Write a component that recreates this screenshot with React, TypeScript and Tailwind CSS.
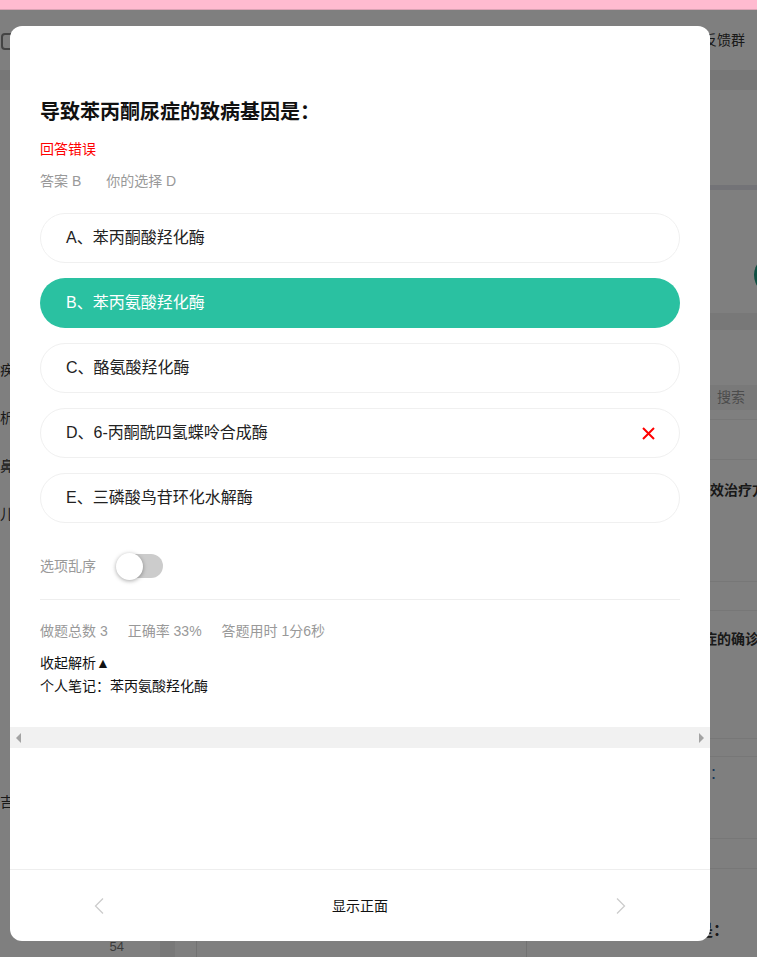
import React from "react";

const options = [
  { key: "A", text: "苯丙酮酸羟化酶" },
  { key: "B", text: "苯丙氨酸羟化酶", correct: true },
  { key: "C", text: "酪氨酸羟化酶" },
  { key: "D", text: "6-丙酮酰四氢蝶呤合成酶", wrong: true },
  { key: "E", text: "三磷酸鸟苷环化水解酶" },
];

const font = "font-['Liberation_Sans','Noto_Sans_CJK_SC',sans-serif]";

export default function App() {
  return (
    <div className={`h-[957px] w-[757px] overflow-hidden bg-white ${font}`}>
      <div className="h-[10px] border-b border-[#d9a3b4] bg-[#ffbbd0]" />
      <div className="relative h-[947px] overflow-hidden">
        <BackgroundPage />
        <div className="absolute inset-0 bg-black/50" />
        <QuestionModal />
      </div>
    </div>
  );
}

function BackgroundPage() {
  return (
    <div className="flex h-full flex-col bg-white text-[14px] text-[#333]">
      <header className="flex h-[60px] shrink-0 items-center justify-between pr-[12px]">
        <div className="ml-[1px] mt-[3px] h-[17px] w-[80px] rounded-[4px] border-2 border-[#888]" />
        <span className="leading-[20px]">问题反馈群</span>
      </header>
      <div className="h-[20px] shrink-0 bg-[#eeeeee]" />
      <div className="flex flex-1">
        <aside className="flex w-[160px] shrink-0 flex-col pt-[256px]">
          {["疾病分类", "析与诊断", "鼻咽癌症", "儿童疾病"].map((t, i) => (
            <div key={i} className="flex h-[48px] items-center whitespace-nowrap leading-[20px]">
              {t}
            </div>
          ))}
          <div className="mt-[254px] leading-[20px]">吉林</div>
          <div className="mt-auto flex h-[20px] justify-end pr-[36px] text-[13px] text-[#777]">54</div>
        </aside>
        <div className="flex w-[36px] shrink-0 flex-col">
          <div className="mt-auto h-[20px] w-[15px] bg-[#f0f0f0]" />
        </div>
        <main className="flex flex-1 flex-col">
          <div className="mt-auto h-[20px] border-x border-[#e4e4e4]" />
        </main>
        <section className="flex w-[230px] shrink-0 flex-col">
          <div className="h-[95px]" />
          <div className="h-[5px] bg-[#e6e6ee]" />
          <div className="flex h-[123px] items-start justify-end pt-[65px]">
            <div className="-mr-[37px] h-[40px] w-[40px] rounded-full bg-[#1f9f85]" />
          </div>
          <div className="h-[17px] bg-[#f0f0f0]" />
          <div className="h-[55px]" />
          <div className="flex h-[25px] items-center justify-end bg-[#f3f3f3] pr-[12px] text-[#999]">
            <span className="mr-[6px] text-[12px]">⚲</span>搜索
          </div>
          <div className="h-[10px] border-b border-[#eee]" />
          <div className="h-[40px] border-b border-[#eee]" />
          <div className="flex h-[60px] items-center pl-[169px] font-bold whitespace-nowrap">有效治疗方案</div>
          <div className="h-[62px] border-b border-[#eee]" />
          <div className="h-[29px] border-b border-[#eee]" />
          <div className="flex h-[56px] items-center pl-[162px] font-bold whitespace-nowrap">病症的确诊断</div>
          <div className="h-[72px] border-b border-[#eee]" />
          <div className="h-[18px] border-b border-[#eee]" />
          <div className="h-[40px] pl-[183px] pt-[6px] text-[#2a6bb0]">：</div>
          <div className="h-[42px] border-b border-[#eee]" />
          <div className="h-[30px] border-b border-[#eee]" />
          <div className="h-[40px]" />
          <div className="flex h-[44px] items-center pl-[170px] text-[16px] font-bold">是：</div>
        </section>
      </div>
    </div>
  );
}

function QuestionModal() {
  return (
    <div className="absolute left-[10px] top-[16px] flex h-[915px] w-[700px] flex-col overflow-hidden rounded-[12px] bg-white">
      <div className="flex-1">
        <div className="px-[30px] pt-[72px]">
          <h2 className="text-[20px] font-bold leading-[28px] text-[#111]">导致苯丙酮尿症的致病基因是：</h2>
          <p className="mt-[13px] text-[14px] leading-[20px] text-[#ff0000]">回答错误</p>
          <p className="mt-[12px] flex text-[14px] leading-[20px] text-[#999]">
            <span className="mr-[25px]">答案 B</span>
            <span>你的选择 D</span>
          </p>

          <div className="mt-[22px] flex flex-col gap-[15px]">
            {options.map((o) => (
              <div
                key={o.key}
                className={
                  o.correct
                    ? "flex h-[50px] items-center rounded-full bg-[#2ac1a1] pl-[26px] pr-[25px] text-[16px] text-white"
                    : "flex h-[50px] items-center rounded-full border border-[#f0f0f0] pl-[25px] pr-[24px] text-[16px] text-[#222]"
                }
              >
                <span className="flex-1">
                  {o.key}、{o.text}
                </span>
                {o.wrong && (
                  <svg width="13" height="13" viewBox="0 0 13 13" className="shrink-0">
                    <path d="M1 1L12 12M12 1L1 12" stroke="#ff0000" strokeWidth="2" />
                  </svg>
                )}
              </div>
            ))}
          </div>

          <div className="mt-[30px] flex h-[26px] items-center">
            <span className="text-[14px] leading-[20px] text-[#999]">选项乱序</span>
            <div className="relative ml-[21px] h-[24px] w-[46px] rounded-full bg-[#cccccc]">
              <div className="absolute -left-[1px] -top-[1px] h-[27px] w-[27px] rounded-full bg-white shadow-[0_1px_4px_rgba(0,0,0,0.35)]" />
            </div>
          </div>

          <div className="mt-[20px] border-t border-[#eeeeee]" />

          <p className="mt-[21px] flex text-[14px] leading-[20px] text-[#999]">
            <span className="mr-[20px]">做题总数 3</span>
            <span className="mr-[20px]">正确率 33%</span>
            <span>答题用时 1分6秒</span>
          </p>
          <p className="mt-[11px] text-[14px] leading-[23px] text-[#111]">收起解析▲</p>
          <p className="text-[14px] leading-[23px] text-[#111]">个人笔记：苯丙氨酸羟化酶</p>
        </div>

        <div className="mt-[29px] flex h-[21px] items-center justify-between bg-[#f1f1f1] px-[6px]">
          <svg width="6" height="10" viewBox="0 0 6 10">
            <path d="M5 0L0 5L5 10Z" fill="#a3a3a3" />
          </svg>
          <svg width="6" height="10" viewBox="0 0 6 10">
            <path d="M1 0L6 5L1 10Z" fill="#a3a3a3" />
          </svg>
        </div>
      </div>

      <footer className="flex h-[72px] shrink-0 items-center justify-between border-t border-[#eeeeee] pl-[84px] pr-[84px]">
        <svg width="10" height="16" viewBox="0 0 10 16">
          <path d="M9 0.5L1.5 8L9 15.5" fill="none" stroke="#cccccc" strokeWidth="1.3" />
        </svg>
        <span className="text-[14px] leading-[20px] text-[#111]">显示正面</span>
        <svg width="10" height="16" viewBox="0 0 10 16">
          <path d="M1 0.5L8.5 8L1 15.5" fill="none" stroke="#cccccc" strokeWidth="1.3" />
        </svg>
      </footer>
    </div>
  );
}
